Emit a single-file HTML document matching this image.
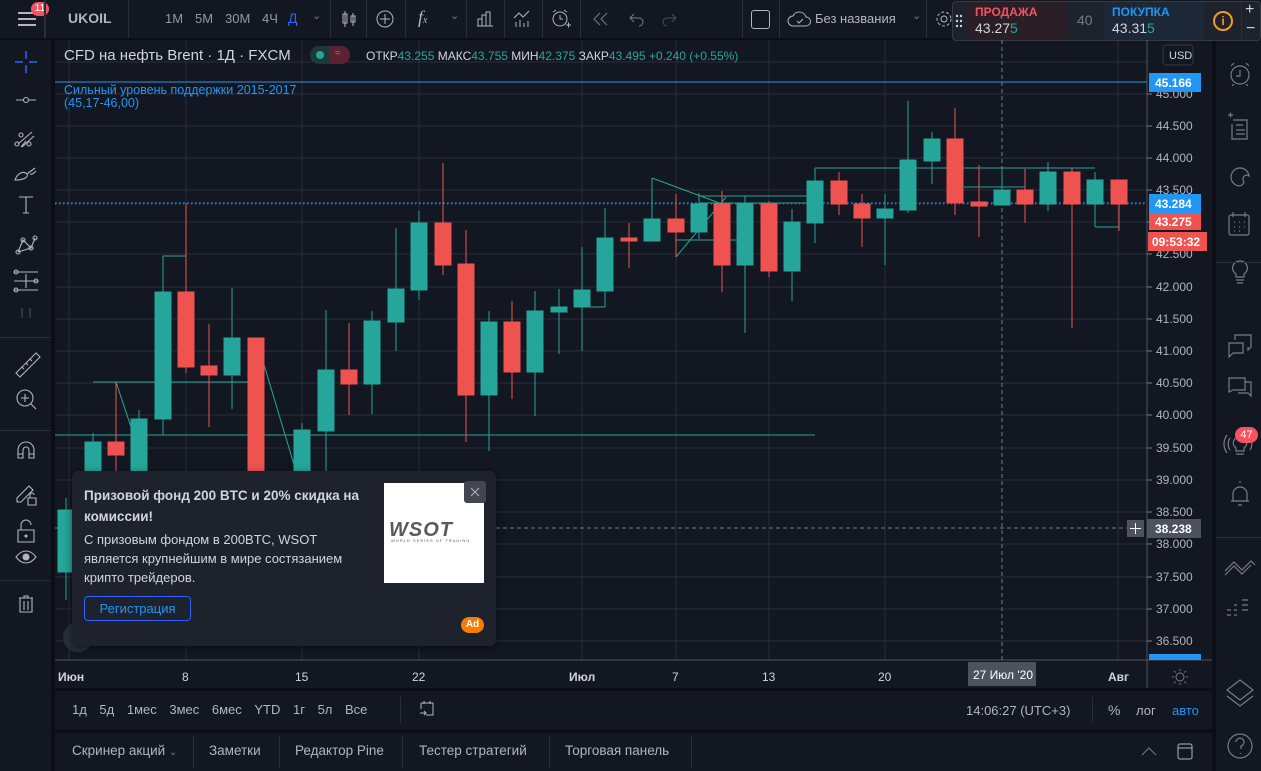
<!DOCTYPE html>
<html><head><meta charset="utf-8"><style>
*{margin:0;padding:0;box-sizing:border-box}
body{width:1261px;height:771px;background:#0c0e15;overflow:hidden;position:relative;font-family:"Liberation Sans","DejaVu Sans",sans-serif;color:#b2b5be;font-size:13px}
.p{position:absolute;background:#131722}
.t{position:absolute;white-space:nowrap}
.sep{position:absolute;background:#2a2e39}
svg{position:absolute;overflow:visible}
.ax{font-size:12px;fill:#b2b5be}
</style></head><body>
<!-- top bar -->
<div class="p" style="left:0;top:0;width:950px;height:38px"></div>
<div class="p" style="left:0;top:40px;width:51px;height:731px"></div>
<div class="p" style="left:55px;top:40px;width:1157px;height:648px"></div>
<div class="p" style="left:55px;top:691px;width:1157px;height:38px"></div>
<div class="p" style="left:55px;top:733px;width:1157px;height:38px"></div>
<div class="p" style="left:1216px;top:40px;width:45px;height:731px"></div>
<div class="p" style="left:950px;top:0;width:311px;height:38px"></div>

<!-- top bar contents -->
<svg style="left:16px;top:10px" width="22" height="18"><path d="M2 3h18M2 9h18M2 15h18" stroke="#b2b5be" stroke-width="2"/></svg>
<div class="t" style="left:31px;top:2px;width:18px;height:14px;border-radius:7px;background:#f7525f;color:#fff;font-size:10px;text-align:center;line-height:14px">11</div>
<div class="sep" style="left:44px;top:0;width:2px;height:38px"></div>
<div class="t" style="left:68px;top:10px;font-weight:bold;color:#b2b5be;font-size:14px">UKOIL</div>
<div class="sep" style="left:128px;top:0;width:1px;height:38px"></div>
<div class="t" style="left:165px;top:11px;color:#9598a1">1M</div>
<div class="t" style="left:195px;top:11px;color:#9598a1">5M</div>
<div class="t" style="left:225px;top:11px;color:#9598a1">30M</div>
<div class="t" style="left:262px;top:11px;color:#9598a1">4Ч</div>
<div class="t" style="left:288px;top:10px;color:#2962ff;font-size:14px">Д</div>
<div class="t" style="left:312px;top:9px;color:#787b86;font-size:11px">⌄</div>
<div class="sep" style="left:330px;top:0;width:1px;height:38px"></div>
<svg style="left:339px;top:9px" width="20" height="20"><path d="M6 2v16M4 5h4v9H4zM14 4v13M12 7h4v6h-4z" stroke="#b2b5be" fill="none"/></svg>
<div class="sep" style="left:366px;top:0;width:1px;height:38px"></div>
<svg style="left:375px;top:9px" width="20" height="20"><circle cx="10" cy="10" r="8" stroke="#b2b5be" fill="none"/><path d="M10 5v10M5 10h10" stroke="#b2b5be"/></svg>
<div class="sep" style="left:405px;top:0;width:1px;height:38px"></div>
<div class="t" style="left:418px;top:7px;color:#b2b5be;font-size:18px;font-family:'Liberation Serif',serif;font-style:italic">f<span style="font-size:10px">x</span></div>
<div class="t" style="left:450px;top:9px;color:#787b86;font-size:11px">⌄</div>
<div class="sep" style="left:466px;top:0;width:1px;height:38px"></div>
<svg style="left:475px;top:9px" width="20" height="20"><path d="M3 17V10h4v7M7 17V6h4v11M11 17V3h4v14M2 17h16" stroke="#b2b5be" fill="none"/></svg>
<div class="sep" style="left:504px;top:0;width:1px;height:38px"></div>
<svg style="left:512px;top:9px" width="20" height="20"><path d="M2 9l5-5 4 4 6-6M4 18v-5M8 18v-7M12 18v-4M16 18v-6" stroke="#b2b5be" fill="none"/></svg>
<div class="sep" style="left:542px;top:0;width:1px;height:38px"></div>
<svg style="left:550px;top:8px" width="22" height="22"><circle cx="10" cy="11" r="7" stroke="#b2b5be" fill="none"/><path d="M10 7v4h3M3 4l3-2M17 4l-3-2M16 17h5M18.5 14.5v5" stroke="#b2b5be" fill="none"/></svg>
<div class="sep" style="left:580px;top:0;width:1px;height:38px"></div>
<svg style="left:592px;top:11px" width="18" height="16"><path d="M8 2L2 8l6 6M15 2L9 8l6 6" stroke="#787b86" fill="none"/></svg>
<svg style="left:628px;top:11px" width="18" height="16"><path d="M6 3L2 7l4 4M2 7h9a4 4 0 0 1 0 8" stroke="#787b86" fill="none"/></svg>
<svg style="left:660px;top:11px" width="18" height="16"><path d="M12 3l4 4-4 4M16 7H7a4 4 0 0 0 0 8" stroke="#4a4e59" fill="none"/></svg>
<div class="sep" style="left:742px;top:0;width:1px;height:38px"></div>
<div class="t" style="left:751px;top:10px;width:19px;height:19px;border:1.5px solid #b2b5be;border-radius:3px"></div>
<div class="sep" style="left:779px;top:0;width:1px;height:38px"></div>
<svg style="left:787px;top:10px" width="26" height="18"><path d="M6 16a5 5 0 0 1 0-10 7 7 0 0 1 13 1 4.5 4.5 0 0 1 0 9z" stroke="#b2b5be" fill="none"/><path d="M10 11l2 2 4-4" stroke="#b2b5be" fill="none"/></svg>
<div class="t" style="left:815px;top:11px;color:#b2b5be">Без названия</div>
<div class="t" style="left:912px;top:9px;color:#787b86;font-size:11px">⌄</div>
<div class="sep" style="left:926px;top:0;width:1px;height:38px"></div>
<svg style="left:934px;top:9px" width="20" height="20"><circle cx="10" cy="10" r="3" stroke="#b2b5be" fill="none"/><circle cx="10" cy="10" r="7" stroke="#b2b5be" stroke-dasharray="3 2" fill="none"/></svg>

<!-- trade widget -->
<div class="t" style="left:952px;top:1px;width:309px;height:40px;background:#1e222d;border:1px solid #363a45;border-radius:4px"></div>
<svg style="left:955px;top:14px" width="8" height="14"><g fill="#d1d4dc"><circle cx="2" cy="2" r="1.2"/><circle cx="6" cy="2" r="1.2"/><circle cx="2" cy="7" r="1.2"/><circle cx="6" cy="7" r="1.2"/><circle cx="2" cy="12" r="1.2"/><circle cx="6" cy="12" r="1.2"/></g></svg>
<div class="t" style="left:967px;top:2px;width:100px;height:38px;background:#2a1f27"></div>
<div class="t" style="left:975px;top:5px;color:#f7525f;font-size:12px;font-weight:bold">ПРОДАЖА</div>
<div class="t" style="left:975px;top:20px;color:#d1d4dc;font-size:14px">43.27<span style="color:#26a69a">5</span></div>
<div class="t" style="left:1077px;top:12px;color:#787b86;font-size:14px">40</div>
<div class="t" style="left:1104px;top:2px;width:100px;height:38px;background:#1c2737"></div>
<div class="t" style="left:1112px;top:5px;color:#2196f3;font-size:12px;font-weight:bold">ПОКУПКА</div>
<div class="t" style="left:1112px;top:20px;color:#d1d4dc;font-size:14px">43.31<span style="color:#26a69a">5</span></div>
<div class="t" style="left:1213px;top:11px;width:20px;height:20px;border:2px solid #f29d1c;border-radius:50%;color:#f29d1c;font-size:12px;font-weight:bold;text-align:center;line-height:16px">i</div>
<div class="sep" style="left:1241px;top:2px;width:1px;height:38px"></div>
<div class="t" style="left:1245px;top:1px;color:#d1d4dc;font-size:16px">+</div>
<div class="t" style="left:1246px;top:20px;color:#d1d4dc;font-size:16px">−</div>

<!-- left toolbar icons -->
<svg style="left:0;top:40px" width="51" height="590" fill="none" stroke="#b2b5be" stroke-width="1.1">
<path d="M26 11v8M26 25v8M15 22h8M29 22h8" stroke="#2962ff" stroke-width="1.5"/>
<path d="M16 60h20"/><circle cx="26" cy="60" r="2.5" fill="#131722"/>
<path d="M18 104l14-12M22 107l12-11M26 101l-5 6"/><circle cx="17" cy="104" r="2"/><circle cx="29" cy="104" r="2"/><circle cx="21" cy="95" r="2"/>
<path d="M15 140c2-6 8-10 12-6 2 3-3 6-12 6zM27 134l8-6M30 134c2 1 4-1 6-3"/>
<path d="M19 157h14M26 157v16M23 173h6"/>
<path d="M18 212l5-12 8 8 4-10M18 212l13-4M23 200l8 8"/><circle cx="18" cy="212" r="2"/><circle cx="23" cy="200" r="2"/><circle cx="31" cy="208" r="2"/><circle cx="35" cy="198" r="2"/>
<path d="M14 232h24M14 241h24M14 250h24M26 234v14"/><circle cx="16" cy="232" r="2"/><circle cx="36" cy="241" r="2"/><circle cx="16" cy="250" r="2"/>
<path d="M22 268v10M30 268v10" stroke="#4a4e59"/>
<path d="M16 333l20-20 4 4-20 20zM22 327l2 2M26 323l2 2M30 319l2 2" />
<circle cx="25" cy="358" r="8"/><path d="M31 364l5 5M25 354v8M21 358h8"/>
<path d="M18 418v-8a8 8 0 0 1 16 0v8h-5v-8a3 3 0 0 0-6 0v8zM18 414h5M29 414h5"/>
<path d="M17 458l12-12 4 4-12 12h-4zM28 458h8v7h-8zM30 458v-3a2 2 0 0 1 4 0"/>
<path d="M18 490h16v12H18zM21 490v-5a5 5 0 0 1 10 0"/><circle cx="26" cy="496" r="1" fill="#b2b5be"/>
<path d="M16 517c6-8 14-8 20 0-6 8-14 8-20 0z"/><circle cx="26" cy="517" r="3" fill="#b2b5be"/>
<path d="M19 558h14M24 558v-2h4v2M20 558v14h12v-14M24 561v9M28 561v9"/>
</svg>
<div class="sep" style="left:0;top:337px;width:51px;height:1px"></div>
<div class="sep" style="left:0;top:430px;width:51px;height:1px"></div>
<div class="sep" style="left:0;top:580px;width:51px;height:1px"></div>

<!-- chart -->
<svg style="left:0;top:0" width="1261" height="771">
<defs><clipPath id="c"><rect x="55" y="40" width="1092" height="620"/></clipPath></defs>
<g clip-path="url(#c)">
<g stroke="#2a2e39" stroke-width="1">
<path d="M55 62h1092M55 94h1092M55 126h1092M55 158h1092M55 190h1092M55 222h1092M55 254h1092M55 287h1092M55 319h1092M55 351h1092M55 383h1092M55 415h1092M55 448h1092M55 480h1092M55 512h1092M55 544h1092M55 577h1092M55 609h1092M55 641h1092"/>
<path d="M69 40v620M186 40v620M302 40v620M419 40v620M582 40v620M676 40v620M769 40v620M885 40v620M1118 40v620"/>
</g>
<path d="M1002 40v620" stroke="#787b86" stroke-dasharray="4 3"/>
<path d="M55 528h1092" stroke="#787b86" stroke-dasharray="4 3"/>
<path d="M55 82h1092" stroke="#2196f3"/>
<path d="M55 203h1092" stroke="#2196f3" stroke-dasharray="2 2"/>
<path d="M55 204h1092" stroke="#ef5350" stroke-dasharray="1 3" opacity=".7"/>
<g stroke="#26a69a" fill="none" stroke-width="1">
<path d="M55 435h760M93 382h157M116 382l20 60M163 256h23M256 338l60 200"/>
<path d="M582 307h23M582 290v17M605 291h0M652 178l70 26M652 178v60M676 257l50-60M676 240h70M700 196h115M700 203l120 0"/>
<path d="M815 168h280M964 187h61M1095 227h24M1095 204v23M815 181v-13"/>
</g>
<g id="cd"></g>
<g fill="#26a69a" stroke="#26a69a">
<path d="M66 498v102M93 433v47M139 410v70M163 256v179M232 288v121M302 423v57M326 310v170M372 311v103M396 228v123M419 211v89M489 311v140M535 291v125M559 289v65M582 247v104M605 208v99M699 193v46M745 196v137M792 209v92M815 168v75M885 194v71M908 101v112M932 132v52M1002 170v35M1048 162v49M1095 172v32"/>
<rect x="58" y="510" width="16" height="62"/><rect x="85" y="442" width="16" height="38"/><rect x="131" y="419" width="16" height="61"/><rect x="155" y="292" width="16" height="127"/><rect x="224" y="338" width="16" height="37"/><rect x="294" y="430" width="16" height="50"/><rect x="318" y="370" width="16" height="61"/><rect x="364" y="321" width="16" height="63"/><rect x="388" y="289" width="16" height="33"/><rect x="411" y="223" width="16" height="67"/><rect x="481" y="322" width="16" height="73"/><rect x="527" y="311" width="16" height="61"/><rect x="551" y="307" width="16" height="5"/><rect x="574" y="290" width="16" height="17"/><rect x="597" y="238" width="16" height="53"/><rect x="644" y="219" width="16" height="22"/><rect x="691" y="204" width="16" height="28"/><rect x="737" y="204" width="16" height="61"/><rect x="784" y="222" width="16" height="49"/><rect x="807" y="181" width="16" height="42"/><rect x="877" y="209" width="16" height="9"/><rect x="900" y="160" width="16" height="50"/><rect x="924" y="139" width="16" height="22"/><rect x="994" y="190" width="16" height="15"/><rect x="1040" y="172" width="16" height="32"/><rect x="1087" y="180" width="16" height="24"/>
</g>
<g fill="#ef5350" stroke="#ef5350">
<path d="M116 382v98M186 203v170M209 324v103M256 338v142M349 323v92M443 163v112M466 230v212M512 301v98M629 223v45M676 194v63M722 191v101M769 201v76M839 172v43M862 194v53M955 108v107M979 165v72M1025 169v54M1072 168v160M1119 180v51"/>
<rect x="108" y="442" width="16" height="13"/><rect x="178" y="292" width="16" height="75"/><rect x="201" y="366" width="16" height="9"/><rect x="248" y="338" width="16" height="142"/><rect x="341" y="370" width="16" height="14"/><rect x="435" y="223" width="16" height="42"/><rect x="458" y="264" width="16" height="131"/><rect x="504" y="322" width="16" height="50"/><rect x="621" y="238" width="16" height="3"/><rect x="668" y="219" width="16" height="13"/><rect x="714" y="204" width="16" height="61"/><rect x="761" y="204" width="16" height="67"/><rect x="831" y="181" width="16" height="23"/><rect x="854" y="204" width="16" height="14"/><rect x="947" y="139" width="16" height="64"/><rect x="971" y="202" width="16" height="4"/><rect x="1017" y="190" width="16" height="14"/><rect x="1064" y="172" width="16" height="32"/><rect x="1111" y="180" width="16" height="24"/>
</g>
</g>
<!-- price axis -->
<path d="M1147 40v620M55 660h1157" stroke="#787b86" stroke-width="1" opacity=".6"/>
<g class="ax" font-size="12">
<text x="1156" y="98">45.000</text><text x="1156" y="130">44.500</text><text x="1156" y="162">44.000</text><text x="1156" y="194">43.500</text><text x="1156" y="258">42.500</text><text x="1156" y="291">42.000</text><text x="1156" y="323">41.500</text><text x="1156" y="355">41.000</text><text x="1156" y="387">40.500</text><text x="1156" y="419">40.000</text><text x="1156" y="452">39.500</text><text x="1156" y="484">39.000</text><text x="1156" y="516">38.500</text><text x="1156" y="548">38.000</text><text x="1156" y="581">37.500</text><text x="1156" y="613">37.000</text><text x="1156" y="645">36.500</text>
</g>
<g stroke="#787b86"><path d="M1147 94h5M1147 126h5M1147 158h5M1147 190h5M1147 222h5M1147 254h5M1147 287h5M1147 319h5M1147 351h5M1147 383h5M1147 415h5M1147 448h5M1147 480h5M1147 512h5M1147 544h5M1147 577h5M1147 609h5M1147 641h5"/></g>
<rect x="1163" y="45" width="30" height="20" rx="3" fill="#131722" stroke="#363a45"/><text x="1169" y="59" font-size="11" fill="#d1d4dc">USD</text>
<rect x="1149" y="73" width="52" height="19" fill="#2196f3"/><text x="1155" y="87" font-size="12" fill="#fff" font-weight="bold">45.166</text>
<rect x="1149" y="194" width="52" height="19" fill="#2196f3"/><text x="1155" y="208" font-size="12" fill="#fff" font-weight="bold">43.284</text>
<rect x="1149" y="213" width="52" height="17" fill="#ef5350"/><text x="1155" y="226" font-size="12" fill="#fff" font-weight="bold">43.275</text>
<rect x="1148" y="232" width="59" height="19" fill="#ef5350"/><text x="1152" y="246" font-size="12" fill="#fff" font-weight="bold">09:53:32</text>
<rect x="1147" y="519" width="54" height="19" fill="#4c525e"/><text x="1155" y="533" font-size="12" fill="#fff" font-weight="bold">38.238</text>
<rect x="1127" y="520" width="17" height="17" fill="#4c525e"/><path d="M1135.5 523v11M1130 528.5h11" stroke="#fff"/>
<rect x="1149" y="654" width="52" height="6" fill="#2196f3"/>
<!-- time axis -->
<g font-size="12" fill="#d1d4dc">
<text x="58" y="681" font-weight="bold">Июн</text><text x="182" y="681">8</text><text x="295" y="681">15</text><text x="412" y="681">22</text><text x="569" y="681" font-weight="bold">Июл</text><text x="672" y="681">7</text><text x="762" y="681">13</text><text x="878" y="681">20</text><text x="1108" y="681" font-weight="bold">Авг</text>
</g>
<rect x="968" y="662" width="68" height="24" fill="#4c525e"/><text x="973" y="679" font-size="12" fill="#fff">27 Июл '20</text>
<path d="M1147 660v28" stroke="#787b86" opacity=".6"/>
<circle cx="1180" cy="677" r="4" fill="none" stroke="#787b86"/><path d="M1180 669v2M1180 683v2M1172 677h2M1186 677h2M1174 671l1.5 1.5M1184.5 681.5l1.5 1.5M1174 683l1.5-1.5M1184.5 672.5l1.5-1.5" stroke="#787b86"/>
</svg>

<!-- legend -->
<div class="t" style="left:64px;top:47px;color:#d1d4dc;font-size:15px">CFD на нефть Brent · 1Д · FXCM</div>
<div class="t" style="left:310px;top:46px;width:40px;height:18px;border-radius:9px;background:#1c3a3a"></div>
<div class="t" style="left:330px;top:46px;width:20px;height:18px;border-radius:0 9px 9px 0;background:#5b2235"></div>
<div class="t" style="left:316px;top:51px;width:8px;height:8px;border-radius:50%;background:#26a69a"></div>
<div class="t" style="left:335px;top:48px;color:#ef5350;font-size:10px">≈</div>
<div class="t" style="left:366px;top:49px;font-size:12px;color:#d1d4dc">ОТКР<span style="color:#26a69a">43.255</span> МАКС<span style="color:#26a69a">43.755</span> МИН<span style="color:#26a69a">42.375</span> ЗАКР<span style="color:#26a69a">43.495</span> <span style="color:#26a69a">+0.240 (+0.55%)</span></div>
<div class="t" style="left:64px;top:84px;color:#2196f3;font-size:12.5px;line-height:13px">Сильный уровень поддержки 2015-2017<br>(45,17-46,00)</div>

<!-- ad -->
<div class="t" style="left:63px;top:622px;width:30px;height:30px;border-radius:50%;background:#2a2e39"></div>
<div class="t" style="left:72px;top:471px;width:424px;height:175px;background:#1e222d;border-radius:6px;box-shadow:0 2px 8px rgba(0,0,0,.5)"></div>
<div class="t" style="left:84px;top:485px;color:#d1d4dc;font-size:13.5px;font-weight:bold;line-height:21px;white-space:normal;width:290px">Призовой фонд 200 BTC и 20% скидка на комиссии!</div>
<div class="t" style="left:84px;top:530px;color:#d1d4dc;font-size:13px;line-height:19px;white-space:normal;width:290px">С призовым фондом в 200BTC, WSOT является крупнейшим в мире состязанием крипто трейдеров.</div>
<div class="t" style="left:84px;top:596px;width:107px;height:25px;border:1px solid #2962ff;border-radius:4px;color:#2196f3;font-size:13px;text-align:center;line-height:23px">Регистрация</div>
<div class="t" style="left:384px;top:483px;width:100px;height:100px;background:#fff"></div>
<div class="t" style="left:389px;top:519px;color:#5a5a5a;font-size:20px;font-weight:bold;letter-spacing:1px;font-style:italic">WSOT</div>
<div class="t" style="left:391px;top:538px;color:#5a5a5a;font-size:4px;letter-spacing:1px">WORLD SERIES OF TRADING</div>
<div class="t" style="left:464px;top:481px;width:22px;height:22px;background:#434651;border-radius:3px"></div>
<svg style="left:469px;top:486px" width="12" height="12"><path d="M2 2l8 8M10 2l-8 8" stroke="#b2b5be"/></svg>
<div class="t" style="left:461px;top:617px;width:23px;height:16px;background:#f57c00;border-radius:8px;color:#fff;font-size:10px;font-weight:bold;text-align:center;line-height:16px">Ad</div>

<!-- bottom toolbar -->
<div class="t" style="left:72px;top:702px;color:#b2b5be;font-size:13px;word-spacing:9px">1д 5д 1мес 3мес 6мес YTD 1г 5л Все</div>
<div class="sep" style="left:400px;top:697px;width:1px;height:26px"></div>
<svg style="left:418px;top:699px" width="18" height="20"><path d="M3 4h12v12H8M3 4v6M6 2v3M12 2v3M2 14h6M6 12l2 2-2 2" stroke="#b2b5be" fill="none"/></svg>
<div class="t" style="left:966px;top:703px;color:#b2b5be;font-size:13px">14:06:27 (UTC+3)</div>
<div class="sep" style="left:1092px;top:697px;width:1px;height:26px"></div>
<div class="t" style="left:1108px;top:702px;color:#b2b5be;font-size:14px">%</div>
<div class="t" style="left:1136px;top:703px;color:#b2b5be;font-size:13px">лог</div>
<div class="t" style="left:1172px;top:703px;color:#2196f3;font-size:13px">авто</div>

<!-- bottom tabs -->
<div class="t" style="left:72px;top:743px;color:#b2b5be;font-size:13.5px">Скринер акций <span style="font-size:10px;color:#787b86">⌄</span></div>
<div class="sep" style="left:193px;top:736px;width:1px;height:32px"></div>
<div class="t" style="left:209px;top:743px;color:#b2b5be;font-size:13.5px">Заметки</div>
<div class="sep" style="left:279px;top:736px;width:1px;height:32px"></div>
<div class="t" style="left:295px;top:743px;color:#b2b5be;font-size:13.5px">Редактор Pine</div>
<div class="sep" style="left:402px;top:736px;width:1px;height:32px"></div>
<div class="t" style="left:419px;top:743px;color:#b2b5be;font-size:13.5px">Тестер стратегий</div>
<div class="sep" style="left:549px;top:736px;width:1px;height:32px"></div>
<div class="t" style="left:565px;top:743px;color:#b2b5be;font-size:13.5px">Торговая панель</div>
<div class="sep" style="left:691px;top:736px;width:1px;height:32px"></div>
<svg style="left:1140px;top:741px" width="60" height="20"><path d="M2 14l7-7 7 7" stroke="#787b86" fill="none"/><rect x="38" y="3" width="14" height="15" rx="2" stroke="#b2b5be" fill="none"/><path d="M38 7h14" stroke="#b2b5be"/></svg>

<!-- right toolbar -->
<svg style="left:1216px;top:40px" width="45" height="731" fill="none" stroke="#787b86" stroke-width="1.2">
<circle cx="24" cy="35" r="9"/><path d="M24 30v6h-4M15 26l3-3M33 26l-3-3M18 44l-2 2M30 44l2 2"/>
<path d="M12 75h5M14.5 72.5v5M17 80h14v19H16V84M20 85h7M20 90h9M20 94h9"/>
<path d="M24 146a9 9 0 1 1 9-10c-3-2-6 0-6 3 0 2 2 3 0 5-1 1-2 2-3 2z"/>
<rect x="13" y="175" width="20" height="20" rx="2"/><path d="M17 172v5M29 172v5M18 182h1M23 182h1M28 182h1M18 187h1M23 187h1M28 187h1M18 191h1M23 191h1"/>
<path d="M24 221a7 7 0 0 0-4 13v3h8v-3a7 7 0 0 0-4-13zM20 240h8M21 243h6"/>
<path d="M13 313v-10h14v10H17l-4 4zM19 300v-5h16v12l-3 3v-3"/>
<path d="M13 352v-14h16v12H17zM29 342h6v14l-3-3H22"/>
<path d="M24 397a6 6 0 0 0-4 11v3h8v-3a6 6 0 0 0-4-11zM20 414h8M14 398a11 11 0 0 0 0 12M34 398a11 11 0 0 1 0 12M11 395a15 15 0 0 0 0 18"/>
<path d="M15 461h18M17 461v-7a7 7 0 0 1 14 0v7M22 465h4M24 441v2"/>
<path d="M9 531l9-9 8 8 9-9 4 4M9 535l9-9 8 8 9-9"/>
<path d="M11 570h4M11 575h4M18 565h3M18 570h3M18 575h3M26 560h6M26 565h6M26 570h6"/>
<path d="M24 640l13 10-13 10-13-10zM11 656l13 10 13-10"/>
<circle cx="24" cy="706" r="12"/><path d="M20 702a4 4 0 1 1 5 4v3M24.5 713v1"/>
</svg>
<div class="sep" style="left:1216px;top:262px;width:45px;height:1px"></div>
<div class="sep" style="left:1216px;top:537px;width:45px;height:1px"></div>
<div class="t" style="left:1235px;top:427px;width:23px;height:16px;border-radius:8px;background:#f7525f;color:#fff;font-size:11px;text-align:center;line-height:16px">47</div>
</body></html>
